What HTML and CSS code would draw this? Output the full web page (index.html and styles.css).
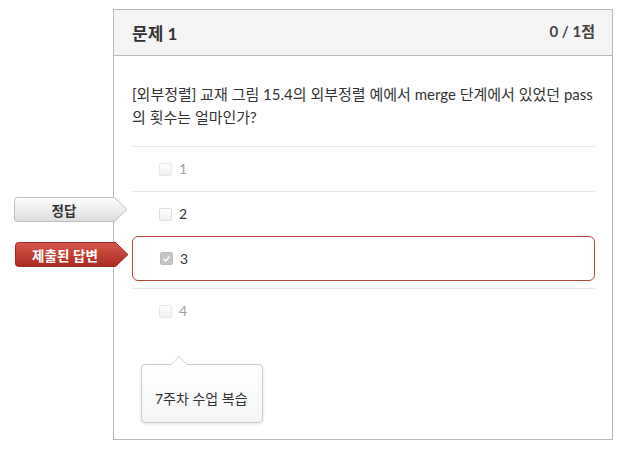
FILE: index.html
```html
<!DOCTYPE html>
<html lang="ko">
<head>
<meta charset="utf-8">
<title>문제 1</title>
<link rel="stylesheet" href="styles.css">
</head>
<body>
<div class="page">
  <div class="question">
    <div class="q-header">
      <span class="q-name">문제 1</span>
      <span class="q-points">0 / 1점</span>
    </div>
    <div class="q-body">
      <p class="q-text">[외부정렬] 교재 그림 15.4의 외부정렬 예에서 merge 단계에서 있었던 pass의 횟수는 얼마인가?</p>
      <div class="answers">
        <div class="answer muted">
          <span class="check"></span><span class="answer-text">1</span>
        </div>
        <div class="answer">
          <span class="flag flag-correct">
            <svg class="flag-shape" width="114" height="25" viewBox="0 0 114 25">
              <defs>
                <linearGradient id="gCorrect" x1="0" y1="0" x2="0" y2="1">
                  <stop offset="0" stop-color="#ffffff"/>
                  <stop offset="1" stop-color="#dcdcdc"/>
                </linearGradient>
              </defs>
              <path d="M3.5 0.5 H100.5 L113 12.5 L100.5 24.5 H3.5 Q0.5 24.5 0.5 21.5 V3.5 Q0.5 0.5 3.5 0.5 Z" fill="url(#gCorrect)" stroke="#bdbdbd"/>
            </svg>
            <span class="flag-label">정답</span>
          </span>
          <span class="check"></span><span class="answer-text">2</span>
        </div>
        <div class="answer selected">
          <span class="flag flag-wrong">
            <svg class="flag-shape" width="114" height="25" viewBox="0 0 114 25">
              <defs>
                <linearGradient id="gWrong" x1="0" y1="0" x2="0" y2="1">
                  <stop offset="0" stop-color="#d8574a"/>
                  <stop offset="1" stop-color="#a92a1f"/>
                </linearGradient>
              </defs>
              <path d="M3.5 0.5 H100.5 L113 12.5 L100.5 24.5 H3.5 Q0.5 24.5 0.5 21.5 V3.5 Q0.5 0.5 3.5 0.5 Z" fill="url(#gWrong)" stroke="#9a2a20"/>
            </svg>
            <span class="flag-label">제출된 답변</span>
          </span>
          <span class="check checked">
            <svg width="12" height="12" viewBox="0 0 12 12"><path d="M3 6.2 L5.1 8.2 L9 3.8" fill="none" stroke="#fff" stroke-width="1.6" stroke-linecap="round" stroke-linejoin="round"/></svg>
          </span><span class="answer-text">3</span>
        </div>
        <div class="answer muted last">
          <span class="check"></span><span class="answer-text">4</span>
        </div>
      </div>
      <div class="comment">7주차 수업 복습</div>
    </div>
  </div>
</div>
</body>
</html>
```

FILE: styles.css
```css
html, body {
  margin: 0;
  padding: 0;
  background: #ffffff;
}

body {
  font-family: "Lato", "Noto Sans CJK KR", "Noto Sans", sans-serif;
  color: #333333;
}

.page {
  padding: 9px 0 0 113px;
}

.question {
  width: 498px;
  border: 1px solid #b8b8b8;
  background: #ffffff;
}

.q-header {
  height: 45px;
  display: flex;
  justify-content: space-between;
  align-items: flex-start;
  padding: 0 17px 0 18px;
  background: #f5f5f5;
  border-bottom: 1px solid #b8b8b8;
}

.q-name {
  font-size: 17px;
  font-weight: 700;
  line-height: 20px;
  margin-top: 14px;
  color: #333333;
}

.q-points {
  font-size: 15px;
  font-weight: 700;
  line-height: 18px;
  margin-top: 12px;
  color: #444444;
}

.q-body {
  padding: 0 17px 16px 18px;
}

.q-text {
  margin: 0;
  padding: 27px 0 0;
  font-size: 15px;
  line-height: 23px;
  color: #333333;
  height: 63px;
}

.answer {
  position: relative;
  height: 44px;
  display: flex;
  align-items: center;
  padding-left: 27px;
  border-top: 1px solid #e6e6e6;
  font-size: 14px;
}

.answer.selected {
  height: 43px;
  border: 1px solid #b1473a;
  border-radius: 6px;
}

.answer.last {
  margin-top: 7px;
}

.answer.muted .answer-text {
  color: #a0a0a0;
}

.check {
  width: 11px;
  height: 11px;
  border: 1px solid #dedede;
  border-radius: 2px;
  background: linear-gradient(#ffffff, #f1f1f1);
  display: inline-flex;
  align-items: center;
  justify-content: center;
  margin-right: 7px;
}

.answer.muted .check {
  border-color: #e8e8e8;
}

.check.checked {
  background: #c4c4c4;
  border-color: #bcbcbc;
}

.check svg {
  display: block;
}

.answer-text {
  line-height: 16px;
  color: #333333;
}

/* Result flags sit to the left of the card, pointing at the answer rows */
.flag {
  position: absolute;
  top: 5px;
  left: -118px;
  width: 114px;
  height: 25px;
  display: flex;
  align-items: center;
}

.flag-shape {
  position: absolute;
  left: 0;
  top: 0;
}

.flag-label {
  position: relative;
  width: 100px;
  text-align: center;
  font-family: "Noto Sans CJK KR", sans-serif;
  font-size: 13.5px;
  font-weight: 700;
  line-height: 16px;
}

.flag-correct .flag-label {
  color: #333333;
}

.flag-wrong .flag-label {
  color: #ffffff;
}

.comment {
  position: relative;
  margin: 31px 0 0 9px;
  width: 122px;
  height: 59px;
  box-sizing: border-box;
  padding: 25px 0 0 13px;
  border: 1px solid #cdcdcd;
  border-radius: 4px;
  background: linear-gradient(#ffffff, #f4f5f6);
  box-shadow: 0 1px 3px rgba(0, 0, 0, 0.12);
  font-size: 14px;
  line-height: 18px;
  color: #333333;
}

/* Pointer on top of the comment bubble */
.comment::before,
.comment::after {
  content: "";
  position: absolute;
  left: 29px;
  width: 0;
  height: 0;
  border-left: 8px solid transparent;
  border-right: 8px solid transparent;
}

.comment::before {
  top: -9px;
  border-bottom: 8px solid #cdcdcd;
}

.comment::after {
  top: -8px;
  border-bottom: 8px solid #ffffff;
}
```
